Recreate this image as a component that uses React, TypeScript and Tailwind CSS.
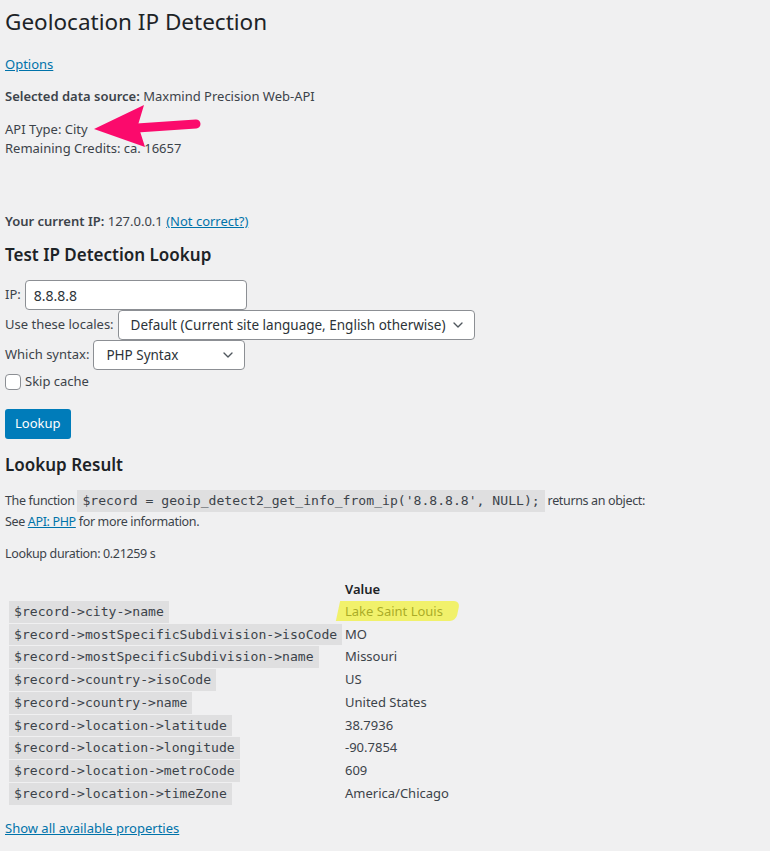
import { ChevronDown } from "lucide-react"

const sans = "font-['Noto_Sans',sans-serif]"
const mono = "font-['DejaVu_Sans_Mono',monospace]"
// the result block is set tighter than the rest of the page
const tight = "text-[12.5px] tracking-[-0.35px]"

const rows: [string, string][] = [
  ["$record->city->name", "Lake Saint Louis"],
  ["$record->mostSpecificSubdivision->isoCode", "MO"],
  ["$record->mostSpecificSubdivision->name", "Missouri"],
  ["$record->country->isoCode", "US"],
  ["$record->country->name", "United States"],
  ["$record->location->latitude", "38.7936"],
  ["$record->location->longitude", "-90.7854"],
  ["$record->location->metroCode", "609"],
  ["$record->location->timeZone", "America/Chicago"],
]

function Code({ children }: { children: React.ReactNode }) {
  return (
    <code className={`${mono} inline-block whitespace-nowrap bg-black/[0.07] px-[5px] pt-[3px] pb-[2px] text-[13.1px] leading-[16.75px] tracking-normal text-[#3c434a]`}>
      {children}
    </code>
  )
}

function Select({ value, width }: { value: string; width: string }) {
  return (
    <div className={`${width} flex h-[30px] items-center justify-between whitespace-nowrap rounded-[4px] border border-[#8c8f94] bg-white pl-[12px] pr-[8px] text-[13.5px] text-[#2c3338]`}>
      <span>{value}</span>
      <ChevronDown className="h-[16px] w-[16px] shrink-0 text-[#50575e]" strokeWidth={2} />
    </div>
  )
}

// pink arrow annotation pointing at the API type line
function Arrow() {
  return (
    <svg className="pointer-events-none absolute left-[92px] top-[103px]" width="115" height="48" viewBox="0 0 115 48">
      <path d="M104 21 L45 25" stroke="#fb0a6c" strokeWidth="9" strokeLinecap="round" fill="none" />
      <path d="M2 26 L52 2 L46 22 L53 44 Z" fill="#fb0a6c" />
    </svg>
  )
}

export default function App() {
  return (
    <div className={`${sans} relative min-h-[851px] bg-[#f0f0f1] pl-[5px] text-[13px] text-[#3c434a]`}>
      <Arrow />
      <h1 className="pt-[7px] text-[22.5px] leading-[30px] font-normal text-[#1d2327]">Geolocation IP Detection</h1>

      <p className="mt-[18px] leading-[18px]">
        <a className="text-[#0073aa] underline">Options</a>
      </p>

      <p className="mt-[14px] leading-[18px]">
        <b className="font-semibold">Selected data source:</b> Maxmind Precision Web-API
      </p>

      <p className="mt-[15px] leading-[19px]">API Type: City</p>
      <p className="leading-[19px]">Remaining Credits: ca. 16657</p>

      <p className="mt-[54px] leading-[18px]">
        <b className="font-semibold">Your current IP:</b> 127.0.0.1{" "}
        <a className="text-[#0073aa] underline">(Not correct?)</a>
      </p>

      <h2 className="mt-[14px] text-[17px] leading-[22px] font-semibold text-[#1d2327]">Test IP Detection Lookup</h2>

      <div className="mt-[14px] flex flex-col">
        <div className="flex h-[30px] items-center gap-[4px]">
          <span>IP:</span>
          <div className="flex h-[30px] w-[222px] items-center rounded-[4px] border border-[#8c8f94] bg-white px-[8px] text-[14px] text-[#2c3338]">
            8.8.8.8
          </div>
        </div>
        <div className="flex h-[30px] items-center gap-[4px]">
          <span>Use these locales:</span>
          <Select value="Default (Current site language, English otherwise)" width="w-[357px]" />
        </div>
        <div className="flex h-[30px] items-center gap-[4px]">
          <span>Which syntax:</span>
          <Select value="PHP Syntax" width="w-[152px]" />
        </div>
        <label className="mt-[3px] flex h-[18px] items-center gap-[4px]">
          <span className="h-[16px] w-[16px] rounded-[4px] border border-[#8c8f94] bg-white" />
          Skip cache
        </label>
      </div>

      <button className="mt-[18px] block h-[30px] rounded-[3px] bg-[#007cba] px-[10px] text-[13px] text-white">Lookup</button>

      <h2 className="mt-[15px] text-[17px] leading-[22px] font-semibold text-[#1d2327]">Lookup Result</h2>

      <p className={`${tight} mt-[14px] leading-[20px]`}>
        The function <Code>$record = geoip_detect2_get_info_from_ip('8.8.8.8', NULL);</Code> returns an object:
        <br />
        See <a className="text-[#0073aa] underline">API: PHP</a> for more information.
      </p>

      <p className={`${tight} mt-[13px] leading-[18px]`}>Lookup duration: 0.21259 s</p>

      <div className="relative mt-[15px] grid grid-cols-[340px_1fr] gap-y-[1px]">
        <div />
        <div className="h-[22px] leading-[22px] font-semibold text-[#1d2327]">Value</div>
        {rows.map(([key, value]) => (
          <div key={key} className="contents">
            <div className="pl-[4px]">
              <Code>{key}</Code>
            </div>
            <div className="flex h-[21.75px] items-center">{value}</div>
          </div>
        ))}
        {/* yellow marker over the city value */}
        <div className="pointer-events-none absolute left-[333px] top-[23px] h-[20px] w-[120px] -skew-x-12 rounded-r-[6px] bg-[#f2f212]/60" />
      </div>

      <p className="mt-[14px] leading-[18px]">
        <a className="text-[#0073aa] underline">Show all available properties</a>
      </p>
    </div>
  )
}
